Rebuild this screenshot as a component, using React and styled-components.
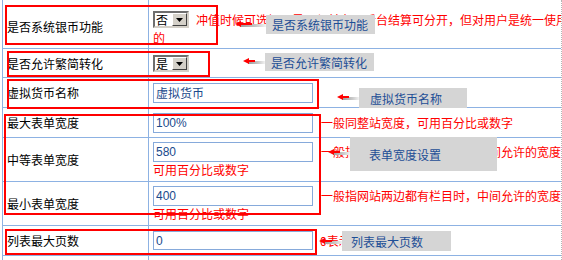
import React from "react";
import styled, { createGlobalStyle } from "styled-components";

const GlobalStyle = createGlobalStyle`
  html, body {
    margin: 0;
    padding: 0;
    overflow: hidden;
    background: #FFFFFF;
  }
  body {
    font-family: "Noto Sans CJK SC", "Liberation Sans", sans-serif;
    font-size: 12px;
  }
`;

const LINE = "#8DB2E3";

const Page = styled.div`
  position: relative;
  width: 562px;
  height: 260px;
  overflow: hidden;
  box-sizing: border-box;
  border-right: 1px dotted #B5B5B5;
`;

const Table = styled.div`
  margin-left: 2px;
  width: 578px;
  border-left: 1px solid ${LINE};
`;

const Row = styled.div`
  display: grid;
  grid-template-columns: 146px 1fr;
  height: ${(p) => p.$h}px;
  box-sizing: border-box;
  border-bottom: 1px solid ${LINE};
`;

const LabelCell = styled.div`
  display: flex;
  align-items: center;
  box-sizing: border-box;
  padding: ${(p) => p.$top || 0}px 0 0 4px;
  border-right: 1px solid ${LINE};
  color: #000000;
  font-size: 12px;
  white-space: nowrap;
`;

const ValueCell = styled.div`
  display: flex;
  align-items: center;
  box-sizing: border-box;
  padding: ${(p) => p.$top || 0}px 4px 0 4px;
  line-height: 16px;
`;

const Flow = styled.div`
  width: 100%;
  color: #FF0000;
  font-size: 12px;
`;

const Select = styled.span`
  display: inline-flex;
  align-items: stretch;
  vertical-align: middle;
  width: 36px;
  height: 17px;
  box-sizing: border-box;
  border: 2px solid;
  border-color: #6E6E6E #D4D0C8 #D4D0C8 #6E6E6E;
  background: #FFFFFF;
  color: #000000;
`;

const SelectText = styled.span`
  flex: 1;
  padding-left: 1px;
  line-height: 13px;
  font-size: 12px;
`;

const SelectButton = styled.span`
  width: 15px;
  box-sizing: border-box;
  background: #D4D0C8;
  border: 1px solid;
  border-color: #FFFFFF #404040 #404040 #FFFFFF;
  display: flex;
  align-items: center;
  justify-content: center;
`;

const Field = styled.input`
  width: 160px;
  height: ${(p) => p.$h || 20}px;
  box-sizing: border-box;
  border: 1px solid #86AADB;
  padding: 0 2px;
  margin: 0;
  vertical-align: middle;
  font-family: "Liberation Sans", "Noto Sans CJK SC", sans-serif;
  font-size: 12px;
  color: #1A4A8C;
  background: #FFFFFF;
  outline: none;
`;

const Note = styled.span`
  margin-left: ${(p) => p.$gap || 0}px;
  vertical-align: middle;
`;

const Hint = styled.span`
  display: inline-block;
  line-height: 14px;
`;

const RedBox = styled.div`
  position: absolute;
  left: ${(p) => p.$x}px;
  top: ${(p) => p.$y}px;
  width: ${(p) => p.$w}px;
  height: ${(p) => p.$h}px;
  box-sizing: border-box;
  border: 2px solid #FF0000;
`;

const Tag = styled.div`
  position: absolute;
  left: ${(p) => p.$x}px;
  top: ${(p) => p.$y}px;
  width: ${(p) => p.$w}px;
  height: ${(p) => p.$h}px;
  box-sizing: border-box;
  padding-left: ${(p) => p.$pad}px;
  display: flex;
  align-items: center;
  background: #D5D5D5;
  color: #1D4E96;
  font-size: 12px;
  white-space: nowrap;
`;

const PointerWrap = styled.svg`
  position: absolute;
  left: ${(p) => p.$x}px;
  top: ${(p) => p.$y}px;
`;

const Caret = () => (
  <svg width="7" height="4" viewBox="0 0 7 4">
    <polygon points="0,0 7,0 3.5,4" fill="#000000" />
  </svg>
);

const Pointer = ({ id, x, y, w }) => (
  <PointerWrap $x={x} $y={y} width={w} height="9" viewBox={`0 0 ${w} 9`}>
    <defs>
      <linearGradient id={id} x1="0" x2="1" y1="0" y2="0">
        <stop offset="0" stopColor="#9A9A9A" />
        <stop offset="0.6" stopColor="#C8C8C8" />
        <stop offset="1" stopColor="#F2F2F2" />
      </linearGradient>
    </defs>
    <rect x="5" y="4" width={w - 5} height="3" fill={`url(#${id})`} />
    <line x1="4" y1="4" x2={Math.round(w * 0.55)} y2="4" stroke="#FF0000" strokeWidth="2" />
    <polygon points="0,4 6,1 6,7" fill="#FF0000" />
  </PointerWrap>
);

const FakeSelect = ({ value }) => (
  <Select>
    <SelectText>{value}</SelectText>
    <SelectButton>
      <Caret />
    </SelectButton>
  </Select>
);

export default function App() {
  return (
    <>
      <GlobalStyle />
      <Page>
        <Table>
          <Row $h={49}>
            <LabelCell $top={5}>是否系统银币功能</LabelCell>
            <ValueCell $top={8}>
              <Flow>
                <FakeSelect value="否" />
                <Note $gap={7}>冲值时候可选择，是否与前台及后台结算可分开，但对用户是统一使用的</Note>
              </Flow>
            </ValueCell>
          </Row>
          <Row $h={29}>
            <LabelCell>是否允许繁简转化</LabelCell>
            <ValueCell>
              <Flow>
                <FakeSelect value="是" />
              </Flow>
            </ValueCell>
          </Row>
          <Row $h={30}>
            <LabelCell>虚拟货币名称</LabelCell>
            <ValueCell>
              <Flow>
                <Field defaultValue="虚拟货币" />
              </Flow>
            </ValueCell>
          </Row>
          <Row $h={30}>
            <LabelCell>最大表单宽度</LabelCell>
            <ValueCell>
              <Flow>
                <Field defaultValue="100%" />
                <Note $gap={8}>一般同整站宽度，可用百分比或数字</Note>
              </Flow>
            </ValueCell>
          </Row>
          <Row $h={44}>
            <LabelCell>中等表单宽度</LabelCell>
            <ValueCell>
              <Flow>
                <Field defaultValue="580" />
                <Note $gap={8}>一般指网站只有一边栏目时，中间允许的宽度</Note>
                <br />
                <Hint>可用百分比或数字</Hint>
              </Flow>
            </ValueCell>
          </Row>
          <Row $h={44}>
            <LabelCell>最小表单宽度</LabelCell>
            <ValueCell>
              <Flow>
                <Field defaultValue="400" />
                <Note $gap={8}>一般指网站两边都有栏目时，中间允许的宽度</Note>
                <br />
                <Hint>可用百分比或数字</Hint>
              </Flow>
            </ValueCell>
          </Row>
          <Row $h={30}>
            <LabelCell>列表最大页数</LabelCell>
            <ValueCell>
              <Flow>
                <Field $h={19} defaultValue="0" />
                <Note $gap={7}>0表示不限制</Note>
              </Flow>
            </ValueCell>
          </Row>
          <Row $h={30}>
            <LabelCell />
            <ValueCell />
          </Row>
        </Table>

        <RedBox $x={5} $y={5} $w={213} $h={40} />
        <RedBox $x={7} $y={51} $w={203} $h={26} />
        <RedBox $x={7} $y={79} $w={312} $h={30} />
        <RedBox $x={4} $y={114} $w={317} $h={101} />
        <RedBox $x={5} $y={229} $w={312} $h={26} />

        <Pointer id="p1" x={235} y={20} w={31} />
        <Pointer id="p2" x={243} y={57} w={22} />
        <Pointer id="p3" x={337} y={93} w={22} />
        <Pointer id="p5" x={328} y={148} w={22} />
        <Pointer id="p7" x={319} y={237} w={23} />

        <Tag $x={266} $y={15} $w={109} $h={19} $pad={6}>是否系统银币功能</Tag>
        <Tag $x={265} $y={53} $w={109} $h={18} $pad={6}>是否允许繁简转化</Tag>
        <Tag $x={359} $y={88} $w={108} $h={20} $pad={11}>虚拟货币名称</Tag>
        <Tag $x={350} $y={137} $w={147} $h={34} $pad={19}>表单宽度设置</Tag>
        <Tag $x={342} $y={231} $w={109} $h={20} $pad={9}>列表最大页数</Tag>
      </Page>
    </>
  );
}
